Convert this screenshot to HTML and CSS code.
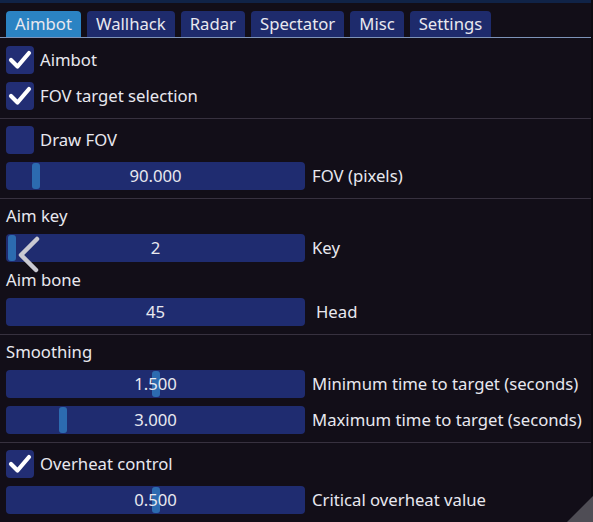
FILE: index.html
```html
<!DOCTYPE html>
<html>
<head>
<meta charset="utf-8">
<link rel="stylesheet" href="styles.css">
</head>
<body>
<div class="window">
  <div class="topstrip"></div>
  <div class="tabbar">
    <div class="tab active">Aimbot</div>
    <div class="tab">Wallhack</div>
    <div class="tab">Radar</div>
    <div class="tab">Spectator</div>
    <div class="tab">Misc</div>
    <div class="tab">Settings</div>
  </div>

  <div class="section first">
    <div class="row"><span class="cb checked"><svg viewBox="0 0 28 28"><polyline points="5,14 11.5,20.5 23,7"/></svg></span><span class="label">Aimbot</span></div>
    <div class="row"><span class="cb checked"><svg viewBox="0 0 28 28"><polyline points="5,14 11.5,20.5 23,7"/></svg></span><span class="label">FOV target selection</span></div>
  </div>
  <div class="sep"></div>
  <div class="section">
    <div class="row"><span class="cb"></span><span class="label">Draw FOV</span></div>
    <div class="row"><div class="slider"><span class="grab" style="left:26px"></span><span class="val">90.000</span></div><span class="slabel">FOV (pixels)</span></div>
  </div>
  <div class="sep"></div>
  <div class="section">
    <div class="text">Aim key</div>
    <div class="row"><div class="slider"><span class="grab" style="left:2px"></span><span class="val">2</span></div><span class="slabel">Key</span></div>
    <div class="text">Aim bone</div>
    <div class="row"><div class="slider"><span class="val">45</span></div><span class="slabel wide">Head</span></div>
  </div>
  <div class="sep"></div>
  <div class="section">
    <div class="text">Smoothing</div>
    <div class="row"><div class="slider"><span class="grab" style="left:146px"></span><span class="val">1.500</span></div><span class="slabel">Minimum time to target (seconds)</span></div>
    <div class="row"><div class="slider"><span class="grab" style="left:53px"></span><span class="val">3.000</span></div><span class="slabel">Maximum time to target (seconds)</span></div>
  </div>
  <div class="sep"></div>
  <div class="section">
    <div class="row"><span class="cb checked"><svg viewBox="0 0 28 28"><polyline points="5,14 11.5,20.5 23,7"/></svg></span><span class="label">Overheat control</span></div>
    <div class="row"><div class="slider"><span class="grab" style="left:146px"></span><span class="val">0.500</span></div><span class="slabel">Critical overheat value</span></div>
  </div>

  <svg class="chevron" viewBox="0 0 30 40"><polyline points="19,3 3,19 18,34"/></svg>
  <div class="grip"></div>
</div>
</body>
</html>
```

FILE: styles.css
```css
html, body {
  margin: 0;
  padding: 0;
  background: #120e18;
}
body {
  width: 593px;
  height: 522px;
  overflow: hidden;
  font-family: "Noto Sans", "DejaVu Sans", sans-serif;
  font-size: 16.7px;
  color: #e8e8ef;
}
.window {
  position: relative;
  width: 591px;
  height: 522px;
  border-right: 2px solid #0c0a10;
  background: #120e18;
}
.topstrip {
  height: 3px;
  background: #102347;
}
.tabbar {
  display: flex;
  gap: 6px;
  padding: 8px 6px 0 6px;
  border-bottom: 1px solid #7d93b8;
  height: 26px;
  box-sizing: content-box;
}
.tab {
  height: 26px;
  line-height: 25px;
  padding: 0 9px;
  background: #1e2b6c;
  border-radius: 4px 4px 0 0;
  white-space: nowrap;
}
.tab.active {
  background: #2b83c3;
}
.section {
  display: flex;
  flex-direction: column;
  gap: 8px;
  padding: 7px 0 8px 6px;
}
.section.first {
  padding-top: 8px;
}
.sep {
  height: 1px;
  background: #37313f;
}
.row {
  display: flex;
  align-items: center;
  height: 28px;
  line-height: 26px;
}
.cb {
  width: 28px;
  height: 28px;
  border-radius: 4px;
  background: #222e74;
  display: flex;
}
.cb svg {
  width: 28px;
  height: 28px;
}
.cb svg polyline {
  fill: none;
  stroke: #ffffff;
  stroke-width: 4.2;
  stroke-linecap: round;
  stroke-linejoin: round;
}
.label {
  margin-left: 6px;
}
.text {
  height: 20px;
  line-height: 19px;
}
.slider {
  position: relative;
  width: 299px;
  height: 28px;
  border-radius: 4px;
  background: #1f2c70;
  display: flex;
  align-items: center;
  justify-content: center;
}
.grab {
  position: absolute;
  top: 1px;
  width: 8px;
  height: 26px;
  border-radius: 3px;
  background: #2c6bb0;
}
.val {
  position: relative;
}
.slabel {
  margin-left: 7px;
  white-space: nowrap;
}
.slabel.wide {
  margin-left: 11px;
}
.chevron {
  position: absolute;
  left: 18px;
  top: 236px;
  width: 30px;
  height: 40px;
}
.chevron polyline {
  fill: none;
  stroke: #c9c9d2;
  stroke-width: 4.5;
  stroke-linecap: round;
  stroke-linejoin: round;
}
.grip {
  position: absolute;
  right: -2px;
  bottom: 0;
  width: 0;
  height: 0;
  border-left: 26px solid transparent;
  border-bottom: 26px solid #4f4d55;
}
```
